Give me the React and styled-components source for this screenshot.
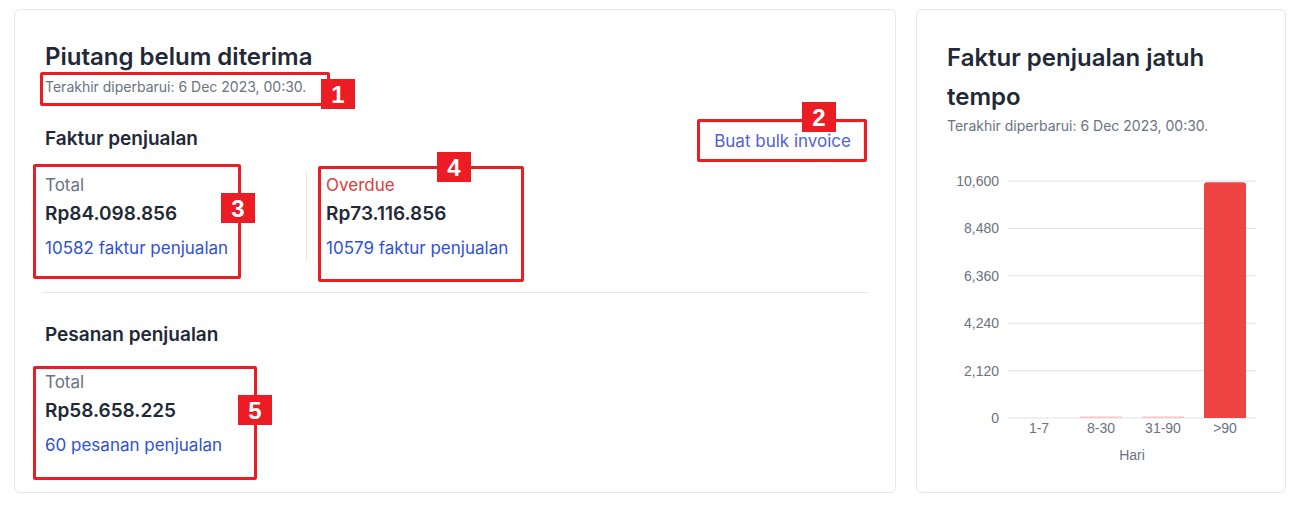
import React from "react";
import styled, { createGlobalStyle } from "styled-components";

const GlobalStyle = createGlobalStyle`
  body {
    margin: 0;
    background: #ffffff;
    font-family: Inter, "Noto Sans", "Liberation Sans", sans-serif;
    color: #1f2937;
  }
`;

// halaman: dua kartu berdampingan
const Page = styled.div`
  position: relative;
  width: 1307px;
  height: 506px;
  box-sizing: border-box;
  padding: 9px 0 0 14px;
  display: flex;
  gap: 20px;
  align-items: flex-start;
`;

const Card = styled.div`
  box-sizing: border-box;
  width: ${props => props.width}px;
  height: 484px;
  border: 1px solid #e5e7eb;
  border-radius: 6px;
  background: #fff;
  padding: ${props => props.padTop}px 30px 0 30px;
  display: flex;
  flex-direction: column;
`;

const Title = styled.h2`
  margin: 0;
  font-size: 24px;
  font-weight: 600;
  line-height: ${props => props.lh || 32}px;
  color: #1f2937;
`;

const Updated = styled.div`
  font-size: 14px;
  line-height: 20px;
  color: #6b7280;
  margin-top: ${props => props.mt || 0}px;
`;

const Section = styled.section`
  display: flex;
  flex-direction: column;
  gap: ${props => props.gap}px;
  margin-top: ${props => props.mt}px;
`;

const SectionHead = styled.div`
  display: flex;
  justify-content: space-between;
  align-items: flex-start;
  height: 40px;
`;

const SectionTitle = styled.h3`
  margin: 0;
  font-size: 19px;
  font-weight: 600;
  line-height: ${props => props.lh || 36}px;
  color: #1f2937;
`;

const BulkButton = styled.button`
  margin-top: 1px;
  margin-right: 1px;
  height: 38px;
  padding: 0 12px 0 15px;
  background: #fff;
  border: 1px solid #e5e7eb;
  border-radius: 4px;
  font-family: inherit;
  font-size: 17px;
  color: #4f5fd5;
  cursor: pointer;
`;

const StatRow = styled.div`
  display: grid;
  grid-template-columns: 261px 260px;
  padding-bottom: 3px;
`;

const Stat = styled.div`
  display: flex;
  flex-direction: column;
  padding-left: ${props => (props.divided ? 19 : 0)}px;
  border-left: ${props => (props.divided ? "1px solid #e5e7eb" : "none")};
`;

const StatLabel = styled.div`
  font-size: 17px;
  line-height: 24px;
  margin-top: 1px;
  color: ${props => (props.danger ? "#e03b3b" : "#6b7280")};
`;

const StatValue = styled.div`
  margin-top: 5px;
  font-size: 19px;
  font-weight: 600;
  line-height: 24px;
  color: #1f2937;
`;

const StatLink = styled.a`
  margin-top: 10px;
  font-size: 17px;
  line-height: 24px;
  color: #2f50d8;
  text-decoration: none;
`;

const Divider = styled.hr`
  margin: 29px 0 0 -2px;
  border: none;
  border-top: 1px solid #e5e7eb;
  width: 824px;
`;

// kotak anotasi merah di atas tangkapan layar
const Mark = styled.div`
  position: absolute;
  box-sizing: border-box;
  left: ${props => props.x}px;
  top: ${props => props.y}px;
  width: ${props => props.w}px;
  height: ${props => props.h}px;
  border: 3px solid #ec1c24;
  border-radius: 2px;
`;

const Badge = styled.div`
  position: absolute;
  left: ${props => props.x}px;
  top: ${props => props.y}px;
  width: 34px;
  height: 30px;
  background: #ec1c24;
  color: #fff;
  font-family: "Liberation Sans", Arial, sans-serif;
  font-weight: 700;
  font-size: 24px;
  line-height: 31px;
  text-align: center;
`;

const ChartWrap = styled.div`
  margin: 14px 0 0 -1px;
  width: 330px;
  height: 330px;
`;

const ticks = [10600, 8480, 6360, 4240, 2120, 0];
const bars = [
  { label: "1-7", value: 0 },
  { label: "8-30", value: 3 },
  { label: "31-90", value: 3 },
  { label: ">90", value: 10540 }
];

const axisFont = "Liberation Sans, Arial, sans-serif";

const DueChart = () => {
  const x0 = 62;
  const x1 = 310;
  const yTop = 31;
  const yBase = 268;
  const band = (x1 - x0) / bars.length;
  const scale = v => ((yBase - yTop) * v) / 10600;
  return (
    <svg width="330" height="330" viewBox="0 0 330 330">
      {ticks.map((t, i) => {
        const y = yTop + ((yBase - yTop) / 5) * i;
        return (
          <g key={t}>
            <line x1={x0} x2={x1} y1={y} y2={y} stroke="#dde1e7" strokeWidth="1" />
            <text x="53" y={y + 5} textAnchor="end" fontSize="14" fill="#6b7280" fontFamily={axisFont}>
              {t.toLocaleString("en-US")}
            </text>
          </g>
        );
      })}
      {bars.map((b, i) => {
        const h = scale(b.value);
        const bx = x0 + band * i + 10;
        const bw = band - 20;
        const cx = x0 + band * i + band / 2;
        return (
          <g key={b.label}>
            {h > 4 && (
              <path
                d={`M${bx} ${yBase} V${yBase - h + 3} Q${bx} ${yBase - h} ${bx + 3} ${yBase - h} H${bx + bw - 3} Q${bx + bw} ${yBase - h} ${bx + bw} ${yBase - h + 3} V${yBase} Z`}
                fill="#ef4444"
              />
            )}
            {b.value > 0 && h <= 4 && (
              <rect x={bx} y={yBase - 1.5} width={bw} height="1.5" fill="#f9c4c4" />
            )}
            <text x={cx} y="283" textAnchor="middle" fontSize="14" fill="#6b7280" fontFamily={axisFont}>
              {b.label}
            </text>
          </g>
        );
      })}
      <text x="186" y="310" textAnchor="middle" fontSize="14" fill="#6b7280" fontFamily={axisFont}>
        Hari
      </text>
    </svg>
  );
};

const StatBlock = ({ label, danger, divided, value, link }) => (
  <Stat divided={divided}>
    <StatLabel danger={danger}>{label}</StatLabel>
    <StatValue>{value}</StatValue>
    <StatLink href="#">{link}</StatLink>
  </Stat>
);

const App = () => (
  <>
    <GlobalStyle />
    <Page>
      <Card width={882} padTop={31}>
        <Title>Piutang belum diterima</Title>
        <Updated mt={4}>Terakhir diperbarui: 6 Dec 2023, 00:30.</Updated>

        <Section mt={24} gap={11}>
          <SectionHead>
            <SectionTitle>Faktur penjualan</SectionTitle>
            <BulkButton>Buat bulk invoice</BulkButton>
          </SectionHead>
          <StatRow>
            <StatBlock label="Total" value="Rp84.098.856" link="10582 faktur penjualan" />
            <StatBlock
              divided
              danger
              label="Overdue"
              value="Rp73.116.856"
              link="10579 faktur penjualan"
            />
          </StatRow>
        </Section>

        <Divider />

        <Section mt={30} gap={22}>
          <SectionTitle lh={24}>Pesanan penjualan</SectionTitle>
          <StatRow>
            <StatBlock label="Total" value="Rp58.658.225" link="60 pesanan penjualan" />
          </StatRow>
        </Section>
      </Card>

      <Card width={370} padTop={28}>
        <Title lh={39}>Faktur penjualan jatuh tempo</Title>
        <Updated>Terakhir diperbarui: 6 Dec 2023, 00:30.</Updated>
        <ChartWrap>
          <DueChart />
        </ChartWrap>
      </Card>

      <Mark x={40} y={72} w={290} h={34} />
      <Badge x={321} y={79}>1</Badge>
      <Mark x={697} y={119} w={170} h={43} />
      <Badge x={802} y={102}>2</Badge>
      <Mark x={33} y={164} w={208} h={115} />
      <Badge x={221} y={193}>3</Badge>
      <Mark x={318} y={166} w={206} h={116} />
      <Badge x={437} y={152}>4</Badge>
      <Mark x={33} y={366} w={224} h={114} />
      <Badge x={238} y={395}>5</Badge>
    </Page>
  </>
);

export default App;
